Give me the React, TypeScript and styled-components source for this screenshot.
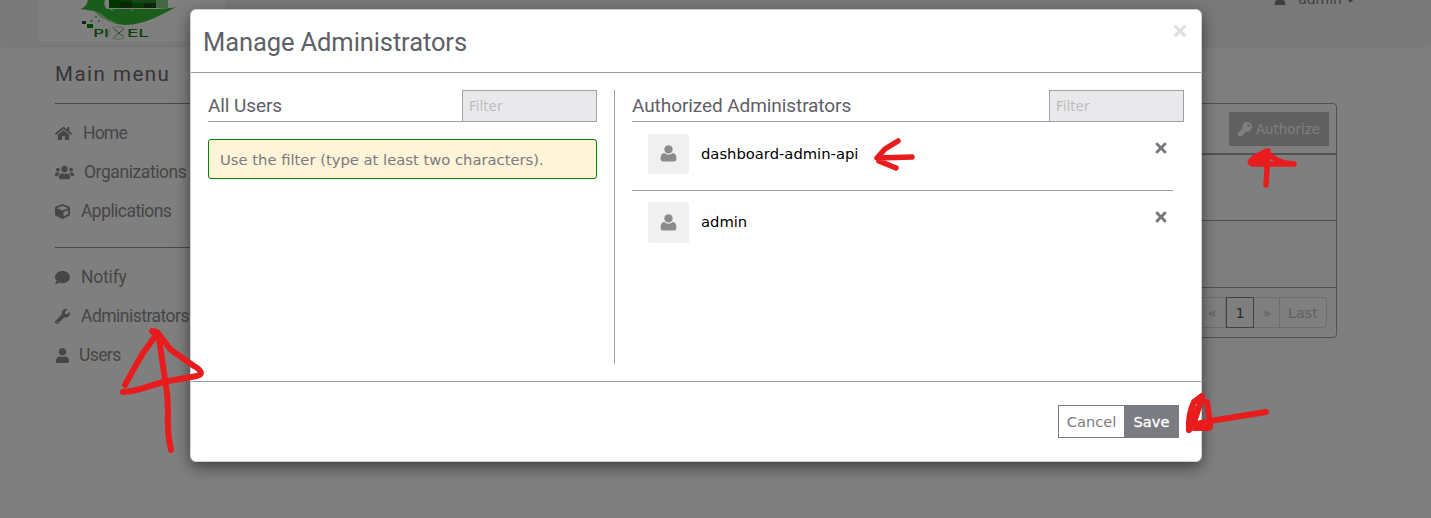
import React from 'react';
import styled, { createGlobalStyle } from 'styled-components';
import { FaHome, FaUsers, FaCube, FaComment, FaWrench, FaUser, FaKey, FaTimes, FaChevronDown } from 'react-icons/fa';

const bodyFont = '"DejaVu Sans", sans-serif';
const headFont = 'Roboto, sans-serif';

const Global = createGlobalStyle`
  * { box-sizing: border-box; }
  html, body { margin: 0; height: 518px; overflow: hidden; background: #fff; }
  body { font-family: ${bodyFont}; font-size: 14.75px; color: #000; }
  h1, h2, h3, p { margin: 0; font-weight: 400; }
`;

const Page = styled.div`
  position: relative;
  width: 1431px;
  height: 518px;
  overflow: hidden;
`;

const Header = styled.header`
  height: 45px;
  padding: 0 75px 0 38px;
  display: flex;
  justify-content: space-between;
  background: #f3f3f3;
  box-shadow: 0 0 6px rgba(0, 0, 0, 0.15);
`;

const LogoBox = styled.div`
  width: 187px;
  height: 41px;
  background: #fff;
`;

const Account = styled.div`
  height: 14px;
  display: flex;
  align-items: center;
  margin-top: -8px;
  color: #7c7c7c;
  font-size: 14px;
  span { margin: 0 3px 0 12px; }
`;

const Columns = styled.div`
  display: flex;
  justify-content: space-between;
  padding: 2px 94px 0 55px;
`;

const Sidebar = styled.nav`
  width: 210px;
  padding-top: 13px;
`;

const MenuTitle = styled.h2`
  height: 43px;
  font: 400 20.5px/29px ${headFont};
  letter-spacing: 1.5px;
  color: #6a6a70;
`;

const MenuGroup = styled.div`
  border-top: 1px solid #909090;
  padding-top: 10px;
  height: 144px;
`;

const MenuItem = styled.div<{ $gap: number; $spacing: number }>`
  display: flex;
  align-items: center;
  height: 39px;
  gap: ${p => p.$gap}px;
  font: 400 17.5px/39px ${headFont};
  letter-spacing: ${p => p.$spacing}px;
  color: #8c8c8c;
  white-space: nowrap;
  svg { flex: none; }
`;

const Table = styled.section`
  width: 900px;
  height: 235px;
  margin-top: 56px;
  border: 1px solid #a4a4a4;
  border-radius: 4px;
`;

const TableTop = styled.div`
  height: 51px;
  display: flex;
  justify-content: flex-end;
  padding: 8px 7px;
  border-bottom: 2px solid #a4a4a4;
`;

const AuthorizeButton = styled.button`
  width: 100px;
  height: 34px;
  border: 0;
  padding: 0;
  display: flex;
  align-items: center;
  justify-content: center;
  gap: 4px;
  background: #c0c0c0;
  color: #fff;
  font: 13.4px ${bodyFont};
`;

const TableRow = styled.div`
  height: 66px;
  border-bottom: 1px solid #a4a4a4;
  & + & { height: 67px; }
`;

const Pager = styled.div`
  display: flex;
  justify-content: flex-end;
  padding: 9px 9px 0 0;
`;

const PageButton = styled.div<{ $w: number; $active?: boolean; $last?: boolean }>`
  width: ${p => p.$w}px;
  height: 31px;
  font-size: 14.3px;
  line-height: 30px;
  text-align: center;
  border: 1px solid ${p => (p.$active ? '#858585' : '#dcdcdc')};
  border-left-width: ${p => (p.$active ? 1 : 0)}px;
  border-radius: ${p => (p.$last ? '0 4px 4px 0' : '0')};
  color: ${p => (p.$active ? '#555' : '#c2c2c2')};
`;

const Backdrop = styled.div`
  position: absolute;
  inset: 0;
  display: flex;
  align-items: flex-start;
  padding: 9px 0 0 190px;
  background: rgba(0, 0, 0, 0.5);
`;

const Dialog = styled.section`
  width: 1012px;
  height: 453px;
  border: 1px solid #d0d0d0;
  border-radius: 6px;
  background: #fff;
  box-shadow: 0 5px 15px rgba(0, 0, 0, 0.5);
`;

const DialogHeader = styled.header`
  height: 63px;
  display: flex;
  justify-content: space-between;
  padding: 12px 12px 0 12px;
  border-bottom: 1px solid #a0a0a4;
`;

const DialogTitle = styled.h1`
  font: 400 25.5px/40px ${headFont};
  letter-spacing: -0.1px;
  color: #5f6067;
`;

const DialogBody = styled.div`
  height: 309px;
  padding: 17px 17px 0 17px;
  display: flex;
  border-bottom: 1px solid #a0a0a4;
`;

const LeftPane = styled.div`
  width: 407px;
  height: 274px;
  padding-right: 17px;
  border-right: 1px solid #a0a0a4;
`;

const RightPane = styled.div`
  width: 569px;
  padding-left: 17px;
`;

const PaneHead = styled.div`
  height: 32px;
  display: flex;
  justify-content: space-between;
  border-bottom: 1px solid #a0a0a4;
`;

const PaneTitle = styled.h3`
  font: 400 19px/32px ${headFont};
  letter-spacing: -0.08px;
  color: #5f6067;
`;

const Filter = styled.input`
  width: 135px;
  height: 32px;
  padding: 0 6px;
  border: 1px solid #a0a0a4;
  border-radius: 0;
  background: #e9e9eb;
  font: 13.5px ${bodyFont};
  &::placeholder { color: #bdbdbd; opacity: 1; }
`;

const Hint = styled.p`
  height: 40px;
  margin-top: 17px;
  padding-left: 11px;
  line-height: 40px;
  border: 1px solid #008000;
  border-radius: 3px;
  background: #fff3d8;
  color: #7b7b7f;
  white-space: nowrap;
`;

const UserRow = styled.div`
  width: 541px;
  height: 69px;
  padding: 12px 4px 0 16px;
  display: flex;
  border-bottom: 1px solid #a0a0a4;
  &:last-child { border: 0; padding-top: 11px; }
`;

const Avatar = styled.div`
  width: 41px;
  height: 40px;
  padding-bottom: 1px;
  display: flex;
  align-items: center;
  justify-content: center;
  border-radius: 2px;
  background: #f0f0f0;
  color: #8b8b8b;
  ${UserRow}:last-child & { height: 41px; }
`;

const UserName = styled.span`
  flex: 1;
  margin-left: 12px;
  line-height: 40px;
`;

const Remove = styled.span`
  height: 28px;
  display: flex;
  align-items: center;
  color: #77787d;
  ${UserRow}:last-child & { height: 30px; }
`;

const DialogFooter = styled.footer`
  display: flex;
  justify-content: flex-end;
  padding: 23px 22px 0;
`;

const FootButton = styled.button<{ $primary?: boolean }>`
  width: ${p => (p.$primary ? 55 : 66)}px;
  height: 33px;
  padding: 0;
  border: 1px solid #7b7c81;
  border-right-width: ${p => (p.$primary ? 1 : 0)}px;
  background: ${p => (p.$primary ? '#7b7c81' : '#fff')};
  color: ${p => (p.$primary ? '#fff' : '#7b7c81')};
  font: 14.6px ${bodyFont};
  -webkit-text-stroke: ${p => (p.$primary ? 0.3 : 0)}px;
`;

const Ink = styled.svg`
  position: absolute;
  inset: 0;
  pointer-events: none;
`;

const Logo = () => (
  <svg width="187" height="41" viewBox="38 0 187 41">
    <path d="M80 9 Q86 8 88 0H105Q103 6 107 9H152Q166 9 176 7Q153 20 140 23Q120 28 107 20L94 11Z" fill="#34ba34" />
    <path d="M94 11l6 2 8 6 11 5-9-2-10-5z" fill="#a2dca2" />
    <path d="M109 0h11v8h-11z" fill="#006c00" />
    <path d="M120 1h12v7h-12z" fill="#154a15" />
    <path d="M120 0h12v2h-12z" fill="#087a08" />
    <path d="M132 0h12v8h-12z" fill="#087a08" />
    <path d="M144 3h12v5h-12z" fill="#154a15" />
    <path d="M132 0h24v3h-24z" fill="#2a8c2a" />
    <path d="M156 0h12v8h-12z" fill="#8aca8a" />
    <path d="M109 8l4 3M129 8l4 3" stroke="#d7f0d7" strokeWidth="1" />
    <path d="M82 21h4v3h-4z" fill="#244f24" />
    <path d="M87 24h6v4h-6z" fill="#008900" />
    <path d="M90 20h3v2h-3zM95 16h2v2h-2zM98 20h2v2h-2z" fill="#88cf88" />
    <g fill="#168116" stroke="#168116" strokeWidth=".2" fontFamily="DejaVu Sans, sans-serif" fontSize="11.3">
      <text x="93" y="37" textLength="16" lengthAdjust="spacingAndGlyphs">PI</text>
      <text x="127" y="37" textLength="21" lengthAdjust="spacingAndGlyphs">EL</text>
    </g>
    <path d="M114 29l10 8M124 29l-10 8" stroke="#5f985f" />
    <path d="M112 28q6-3 12 0M112 38q6 3 12 0M110 30q-3 3 0 6" fill="none" stroke="#a8d5a8" />
  </svg>
);

const Bust = () => (
  <svg width="17" height="17" viewBox="0 0 17 17" fill="currentColor">
    <ellipse cx="8.5" cy="4.4" rx="4.2" ry="4.2" />
    <path d="M4.4 8Q.6 8.3.6 13.6Q.6 16.6 3 16.6H14Q16.4 16.6 16.4 13.6Q16.4 8.3 12.6 8Q11 9.7 8.5 9.7Q6 9.7 4.4 8Z" />
  </svg>
);

const people = ['dashboard-admin-api', 'admin'];

export default function App() {
  return (
    <Page>
      <Global />
      <Header>
        <LogoBox><Logo /></LogoBox>
        <Account><FaUser size={12} /><span>admin</span><FaChevronDown size={11} /></Account>
      </Header>
      <Columns>
        <Sidebar>
          <MenuTitle>Main menu</MenuTitle>
          <MenuGroup>
            <MenuItem $gap={11} $spacing={-0.8}><FaHome size={17} />Home</MenuItem>
            <MenuItem $gap={10} $spacing={-0.42}><FaUsers size={19} />Organizations</MenuItem>
            <MenuItem $gap={11} $spacing={-0.55}><FaCube size={15} />Applications</MenuItem>
          </MenuGroup>
          <MenuGroup>
            <MenuItem $gap={11} $spacing={-0.2}><FaComment size={15} />Notify</MenuItem>
            <MenuItem $gap={11} $spacing={-0.52}><FaWrench size={15} />Administrators</MenuItem>
            <MenuItem $gap={9} $spacing={-0.6}><FaUser size={15} />Users</MenuItem>
          </MenuGroup>
        </Sidebar>
        <Table>
          <TableTop><AuthorizeButton><FaKey size={14} />Authorize</AuthorizeButton></TableTop>
          <TableRow /><TableRow />
          <Pager>
            <PageButton $w={27}>«</PageButton>
            <PageButton $w={28} $active>1</PageButton>
            <PageButton $w={26}>»</PageButton>
            <PageButton $w={47} $last>Last</PageButton>
          </Pager>
        </Table>
      </Columns>
      <Backdrop>
        <Dialog>
          <DialogHeader>
            <DialogTitle>Manage Administrators</DialogTitle>
            <FaTimes size={18} color="#e1e1e1" />
          </DialogHeader>
          <DialogBody>
            <LeftPane>
              <PaneHead><PaneTitle>All Users</PaneTitle><Filter placeholder="Filter" /></PaneHead>
              <Hint>Use the filter (type at least two characters).</Hint>
            </LeftPane>
            <RightPane>
              <PaneHead><PaneTitle>Authorized Administrators</PaneTitle><Filter placeholder="Filter" /></PaneHead>
              {people.map(name => (
                <UserRow key={name}>
                  <Avatar><Bust /></Avatar>
                  <UserName>{name}</UserName>
                  <Remove><FaTimes size={16} /></Remove>
                </UserRow>
              ))}
            </RightPane>
          </DialogBody>
          <DialogFooter><FootButton>Cancel</FootButton><FootButton $primary>Save</FootButton></DialogFooter>
        </Dialog>
      </Backdrop>
      <Ink width="1431" height="518" fill="none" stroke="#e81c1c" strokeWidth="6" strokeLinecap="round" strokeLinejoin="round">
        <path d="M125 385Q133 370 143 353L156 335L152 331L157 332L171 350L194 366Q206 373 197 376L163 382C145 387 137 392 123 392M158 334L160 345L165 380Q168 395 168 411Q167 433 171 450" />
        <path strokeWidth="5.5" d="M898 141L885 149L877 158L912 157M879 161L896 168" />
        <path strokeWidth="5.5" d="M1294 164L1252 164Q1247 162 1257 156Q1266 151 1268 151L1268 157L1251 162M1269 154Q1277 163 1294 164M1267 155V169L1266 185" />
        <path d="M1189 430Q1188 414 1194 402L1202 396M1202 398L1193 425M1207 402L1210 424Q1211 429 1206 428H1194M1192 426L1198 408M1193 425L1210 421L1266 412" />
      </Ink>
    </Page>
  );
}
